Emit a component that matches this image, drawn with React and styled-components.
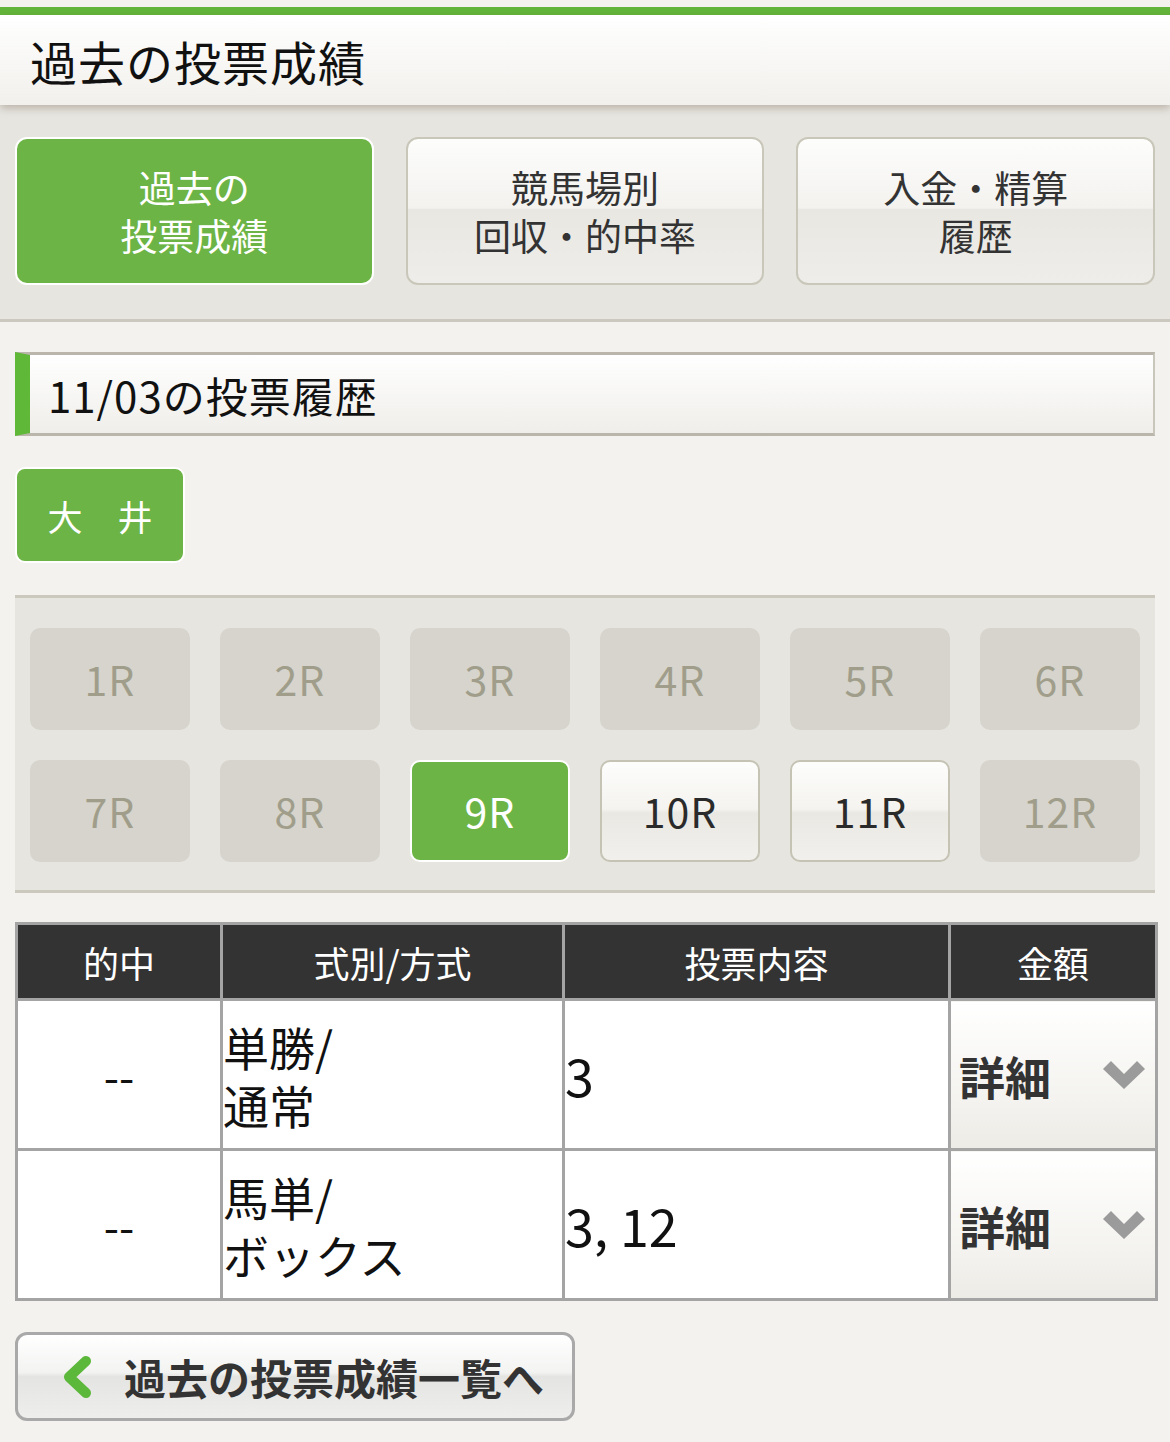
import React from 'react';
import styled, { createGlobalStyle } from 'styled-components';

const GlobalStyle = createGlobalStyle`
   html, body {
      margin: 0;
      padding: 0;
      background: #f3f2ee;
   }
   body {
      font-family: "Noto Sans CJK JP", "Noto Sans", sans-serif;
      color: #222;
   }
`;

const Page = styled.div`
   width: 1170px;
   padding-top: 7px;
   padding-bottom: 20px;
   background: #f3f2ee;
`;

const TopLine = styled.div`
   height: 8px;
   background: #62b53a;
`;

const Header = styled.header`
   position: relative;
   z-index: 1;
   height: 90px;
   display: flex;
   align-items: center;
   padding-left: 30px;
   background: linear-gradient(#ffffff, #f1f0ec);
   box-shadow: 0 3px 8px rgba(120, 100, 80, 0.4);
`;

const Title = styled.h1`
   margin: 0;
   font-size: 47px;
   font-weight: 400;
   color: #111;
   letter-spacing: 1px;
`;

const TabArea = styled.nav`
   display: grid;
   grid-template-columns: repeat(3, 1fr);
   gap: 32px;
   padding: 32px 15px 34px;
   background: #e6e5e0;
   border-bottom: 3px solid #cbc9bf;
`;

const Tab = styled.div`
   height: 148px;
   box-sizing: border-box;
   display: flex;
   align-items: center;
   justify-content: center;
   text-align: center;
   font-size: 37px;
   line-height: 48px;
   border-radius: 12px;
   border: 2px solid ${p => (p.active ? '#ffffff' : '#c9c7ba')};
   color: ${p => (p.active ? '#ffffff' : '#333333')};
   background: ${p =>
      p.active
         ? '#6db446'
         : 'linear-gradient(#fdfdfc 0%, #f3f2ef 48%, #e8e7e2 49%, #eeede9 100%)'};
`;

const Heading = styled.div`
   margin: 30px 15px 0;
   height: 84px;
   box-sizing: border-box;
   display: flex;
   align-items: center;
   border-top: 3px solid #bab6ab;
   border-bottom: 3px solid #bab6ab;
   border-right: 2px solid #c9c6bc;
   border-left: 15px solid #5fb838;
   padding-left: 18px;
   background: linear-gradient(#ffffff, #efeeea);
   font-size: 42px;
   color: #111;
   letter-spacing: 1px;
`;

const Venue = styled.div`
   margin: 31px 15px 0;
   width: 170px;
   height: 96px;
   box-sizing: border-box;
   display: flex;
   align-items: center;
   justify-content: center;
   border-radius: 10px;
   border: 2px solid #ffffff;
   background: #6db446;
   color: #ffffff;
   font-size: 35px;
`;

const RacePanel = styled.div`
   margin: 32px 15px 0;
   display: grid;
   grid-template-columns: repeat(6, 160px);
   grid-auto-rows: 102px;
   column-gap: 30px;
   row-gap: 30px;
   padding: 30px 15px 28px;
   background: #e6e5e0;
   border-top: 3px solid #cbc9be;
   border-bottom: 3px solid #cbc9be;
`;

const raceStyles = {
   off: 'background: #d6d4cc; border: 2px solid #d6d4cc; color: #a09e8b;',
   on: 'background: #6db446; border: 2px solid #ffffff; color: #ffffff;',
   open:
      'background: linear-gradient(#fdfdfc 0%, #f4f3ef 48%, #e9e8e3 52%, #f1f0ec 100%); border: 2px solid #c5c3b4; color: #2a2a2a;',
};

const Race = styled.div`
   box-sizing: border-box;
   display: flex;
   align-items: center;
   justify-content: center;
   border-radius: 10px;
   font-size: 41px;
   letter-spacing: 1px;
   padding-bottom: 3px;
   ${p => raceStyles[p.state]}
`;

const Table = styled.table`
   margin: 29px 15px 0;
   width: 1140px;
   border-collapse: collapse;
   table-layout: fixed;
   border: 3px solid #a4a4a4;
`;

const Th = styled.th`
   height: 73px;
   padding: 0;
   background: #333333;
   color: #ffffff;
   font-weight: 400;
   font-size: 36px;
   border: 3px solid #a4a4a4;
`;

const Td = styled.td`
   height: 147px;
   padding: 0;
   border: 3px solid #a4a4a4;
   background: #ffffff;
   color: #111;
   font-size: ${p => p.size || 46}px;
   line-height: 58px;
   text-align: ${p => p.align || 'left'};
   vertical-align: middle;
`;

const DetailCell = styled.td`
   padding: 0 10px 0 8px;
   border: 3px solid #a4a4a4;
   background: linear-gradient(#ffffff, #f3f2ee 70%, #ecebe6);
`;

const Detail = styled.div`
   display: flex;
   align-items: center;
   justify-content: space-between;
   font-size: 46px;
   font-weight: 700;
   color: #333;
`;

const BackButton = styled.div`
   margin: 31px 15px 0;
   width: 560px;
   height: 89px;
   box-sizing: border-box;
   display: flex;
   align-items: center;
   gap: 30px;
   padding-left: 42px;
   border-radius: 12px;
   border: 3px solid #a9a9a9;
   background: linear-gradient(#ffffff 0%, #f3f3f2 45%, #e4e4e2 50%, #eeeeec 100%);
   font-size: 42px;
   font-weight: 700;
   color: #333;
`;

const DownChevron = () => (
   <svg width="42" height="30" viewBox="0 0 42 30">
      <polygon points="0,9 8,1 21,14 34,1 42,9 21,29" fill="#9b9b9b" />
   </svg>
);

const BackChevron = () => (
   <svg width="34" height="42" viewBox="0 0 34 42">
      <polyline
         points="26,5 9,21 26,37"
         fill="none"
         stroke="#5cb83a"
         strokeWidth="10"
         strokeLinecap="round"
         strokeLinejoin="round"
      />
   </svg>
);

const races = [
   ['1R', 'off'], ['2R', 'off'], ['3R', 'off'], ['4R', 'off'], ['5R', 'off'], ['6R', 'off'],
   ['7R', 'off'], ['8R', 'off'], ['9R', 'on'], ['10R', 'open'], ['11R', 'open'], ['12R', 'off'],
];

const bets = [
   { hit: '--', type: ['単勝/', '通常'], content: '3' },
   { hit: '--', type: ['馬単/', 'ボックス'], content: '3, 12' },
];

export default function App() {
   return (
      <Page>
         <GlobalStyle />
         <TopLine />
         <Header>
            <Title>過去の投票成績</Title>
         </Header>
         <TabArea>
            <Tab active>過去の<br />投票成績</Tab>
            <Tab>競馬場別<br />回収・的中率</Tab>
            <Tab>入金・精算<br />履歴</Tab>
         </TabArea>
         <Heading>11/03の投票履歴</Heading>
         <Venue>大　井</Venue>
         <RacePanel>
            {races.map(([label, state]) => (
               <Race key={label} state={state}>{label}</Race>
            ))}
         </RacePanel>
         <Table>
            <colgroup>
               <col style={{ width: 205 }} />
               <col style={{ width: 342 }} />
               <col style={{ width: 386 }} />
               <col style={{ width: 207 }} />
            </colgroup>
            <thead>
               <tr>
                  <Th>的中</Th>
                  <Th>式別/方式</Th>
                  <Th>投票内容</Th>
                  <Th>金額</Th>
               </tr>
            </thead>
            <tbody>
               {bets.map((b, i) => (
                  <tr key={i}>
                     <Td align="center" size={44}>{b.hit}</Td>
                     <Td>{b.type[0]}<br />{b.type[1]}</Td>
                     <Td size={52}>{b.content}</Td>
                     <DetailCell>
                        <Detail>
                           詳細
                           <DownChevron />
                        </Detail>
                     </DetailCell>
                  </tr>
               ))}
            </tbody>
         </Table>
         <BackButton>
            <BackChevron />
            過去の投票成績一覧へ
         </BackButton>
      </Page>
   );
}
